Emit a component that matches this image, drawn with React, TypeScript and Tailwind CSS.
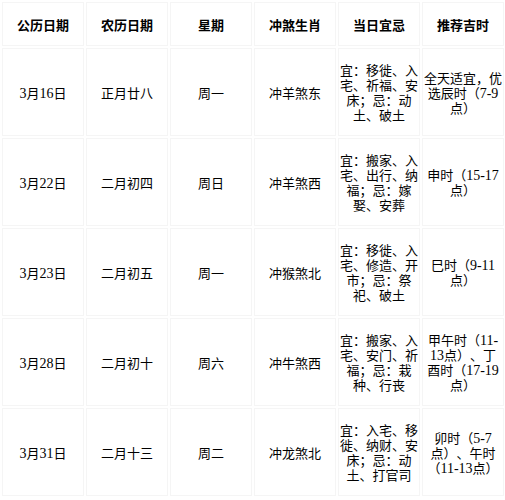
const headers = ['公历日期', '农历日期', '星期', '冲煞生肖', '当日宜忌', '推荐吉时']

const rows = [
  ['3月16日', '正月廿八', '周一', '冲羊煞东', '宜：移徙、入宅、祈福、安床；忌：动土、破土', '全天适宜，优选辰时（7-9点）'],
  ['3月22日', '二月初四', '周日', '冲羊煞西', '宜：搬家、入宅、出行、纳福；忌：嫁娶、安葬', '申时（15-17点）'],
  ['3月23日', '二月初五', '周一', '冲猴煞北', '宜：移徙、入宅、修造、开市；忌：祭祀、破土', '巳时（9-11点）'],
  ['3月28日', '二月初十', '周六', '冲牛煞西', '宜：搬家、入宅、安门、祈福；忌：栽种、行丧', '甲午时（11-13点）、丁酉时（17-19点）'],
  ['3月31日', '二月十三', '周二', '冲龙煞北', '宜：入宅、移徙、纳财、安床；忌：动土、打官司', '卯时（5-7点）、午时（11-13点）'],
]

// latin digits render a touch larger than the CJK text
function Cell({ text }: { text: string }) {
  const parts = text.split(/([0-9-]+)/)
  return (
    <>
      {parts.map((p, i) =>
        /[0-9]/.test(p) ? (
          <span key={i} className="text-[14px]">{p}</span>
        ) : (
          p
        )
      )}
    </>
  )
}

export default function App() {
  return (
    <div className="w-[505px] h-[500px] overflow-hidden bg-white text-black font-['Liberation_Serif','Noto_Sans_CJK_SC',serif] text-[13px] leading-[15px] [text-spacing-trim:space-all]">
      <table className="w-[506px] table-fixed border-separate border-spacing-[2px]">
        <thead>
          <tr>
            {headers.map(h => (
              <th key={h} className="w-[82px] h-[44px] border border-[#f5f5f5] px-px pt-[3px] pb-px text-center align-middle font-bold">
                {h}
              </th>
            ))}
          </tr>
        </thead>
        <tbody>
          {rows.map(r => (
            <tr key={r[0]}>
              {r.map((c, i) => (
                <td key={i} className="h-[88px] border border-[#f5f5f5] px-px pt-[3px] pb-px text-center align-middle">
                  <Cell text={c} />
                </td>
              ))}
            </tr>
          ))}
        </tbody>
      </table>
    </div>
  )
}
